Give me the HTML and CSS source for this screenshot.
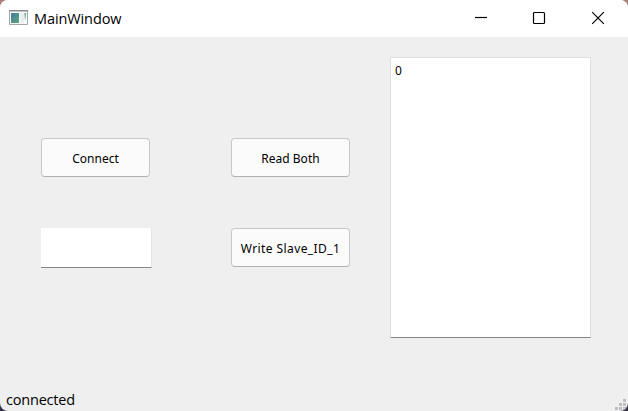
FILE: index.html
```html
<!DOCTYPE html>
<html lang="en">
<head>
<meta charset="utf-8">
<title>MainWindow</title>
<link rel="stylesheet" href="styles.css">
</head>
<body>
<div class="window">
  <header class="titlebar">
    <svg class="app-icon" width="20" height="16" viewBox="0 0 20 16">
      <defs>
        <linearGradient id="pane" x1="0" y1="0" x2="1" y2="1"><stop offset="0" stop-color="#4779a0"/><stop offset="1" stop-color="#58a878"/></linearGradient>
        <linearGradient id="side" x1="0" y1="0" x2="0" y2="1"><stop offset="0" stop-color="#4f9477"/><stop offset="1" stop-color="#dce7ee"/></linearGradient>
      </defs>
      <path fill="#fafafa" stroke="#a2a6a9" d="M.5.5h18v14H.5z"/>
      <path fill="#878c91" d="M0 0h19v1.5H0z"/>
      <path fill="url(#pane)" d="M2 3h8v10H2z"/>
      <path fill="#e8edf0" d="M11 3h4v10h-4z"/>
      <path fill="url(#side)" d="M15.5 3h1.5v7h-1.5z"/>
    </svg>
    <span class="title">MainWindow</span>
    <div class="controls">
      <svg width="14" height="14" viewBox="0 0 14 14"><path d="M1 6.5h12"/></svg>
      <svg width="14" height="14" viewBox="0 0 14 14"><rect x="1.5" y="1.5" width="11" height="11" rx="1"/></svg>
      <svg width="14" height="14" viewBox="0 0 14 14"><path d="M1.2 1.2l11.6 11.6M12.8 1.2L1.2 12.8"/></svg>
    </div>
  </header>
  <main class="content">
    <div class="forms">
      <button class="btn">Connect</button>
      <button class="btn read">Read Both</button>
      <input class="field" type="text" aria-label="Value">
      <button class="btn write">Write Slave_ID_1</button>
    </div>
    <div class="log">0</div>
  </main>
  <footer class="status">
    <span>connected</span>
    <svg class="grip" width="12" height="12" viewBox="0 0 12 12"><path d="M8 0h3v3H8zM4 4h3v3H4zM8 4h3v3H8zM0 8h3v3H0zM4 8h3v3H4zM8 8h3v3H8z"/></svg>
  </footer>
</div>
</body>
</html>
```

FILE: styles.css
```css
* { box-sizing: border-box; }
body {
  margin: 0;
  background: linear-gradient(#ab8078 0, #ab8078 50%, #35304a 50%);
  font-family: "Noto Sans", "Open Sans", sans-serif;
  color: #000;
}
.window {
  width: 628px;
  height: 411px;
  display: flex;
  flex-direction: column;
  overflow: hidden;
  border-radius: 8px;
  background: #efefef;
}
.titlebar {
  height: 37px;
  flex: none;
  display: flex;
  align-items: center;
  padding: 0 23px 0 9px;
  background: #fff;
}
.app-icon { flex: none; margin-top: -2px; }
.title {
  margin: 0 0 0 5px;
  font: 14.5px/20px "Open Sans", sans-serif;
  letter-spacing: -0.1px;
}
.controls {
  display: flex;
  gap: 45px;
  margin: -1px 0 0 auto;
}
.controls svg {
  fill: none;
  stroke: #000;
  stroke-width: 1.2;
}
.controls svg:first-child { margin-right: -1px; }
.content {
  flex: 1;
  display: flex;
  align-items: flex-start;
  gap: 40px;
  padding: 20px 37px 0 41px;
}
.forms {
  display: grid;
  grid-template-columns: 111px 119px;
  grid-template-rows: 39px 40px;
  column-gap: 79px;
  row-gap: 51px;
  margin-top: 81px;
}
.btn {
  width: 119px;
  height: 39px;
  padding: 2px 0 0;
  border: 1px solid #c8c8c8;
  border-bottom-color: #b0b0b0;
  border-radius: 4px;
  background: #fbfbfb;
  color: #000;
  font: 12px/16px "Noto Sans", sans-serif;
  white-space: nowrap;
}
.btn:first-child { width: 109px; }
.write { letter-spacing: 0.4px; }
.field {
  width: 111px;
  height: 40px;
  border: 0 solid #e6e6e6;
  border-right-width: 1px;
  border-bottom: 1px solid #868686;
  background: #fff;
}
.log {
  width: 201px;
  height: 281px;
  padding: 5px 4px;
  border: 1px solid #dedede;
  border-bottom-color: #868686;
  background: #fff;
  font: 12px/16px "Noto Sans", sans-serif;
}
.status {
  height: 22px;
  flex: none;
  display: flex;
  justify-content: space-between;
  align-items: flex-end;
  padding: 0 1px 0 6px;
  font: 14.5px/22px "Open Sans", sans-serif;
  letter-spacing: -0.2px;
}
.grip { fill: #bfbfbf; }
```
